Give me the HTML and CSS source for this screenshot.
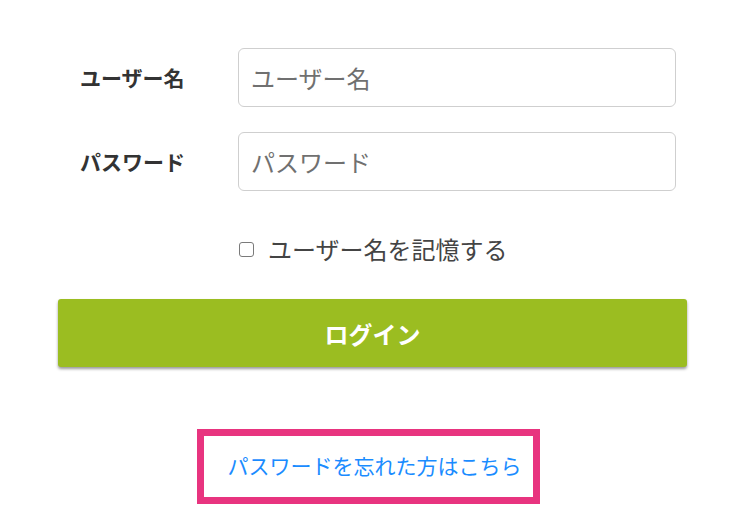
FILE: index.html
```html
<!DOCTYPE html>
<html lang="ja">
<head>
<meta charset="utf-8">
<title>ログイン</title>
<link rel="stylesheet" href="styles.css">
</head>
<body>
<main class="page">
  <form class="login-form">
    <div class="field-row">
      <label class="field-label" for="username">ユーザー名</label>
      <input class="field-input" id="username" type="text" placeholder="ユーザー名">
    </div>
    <div class="field-row">
      <label class="field-label" for="password">パスワード</label>
      <input class="field-input" id="password" type="password" placeholder="パスワード">
    </div>
    <label class="remember">
      <input class="remember-box" type="checkbox">
      <span class="remember-text">ユーザー名を記憶する</span>
    </label>
    <button class="login-button" type="button">ログイン</button>
  </form>
  <div class="forgot-wrap">
    <a class="forgot-link" href="#">パスワードを忘れた方はこちら</a>
  </div>
</main>
</body>
</html>
```

FILE: styles.css
```css
* {
  box-sizing: border-box;
}

html, body {
  margin: 0;
  padding: 0;
  background: #ffffff;
}

body {
  font-family: "Noto Sans CJK JP", "Noto Sans", sans-serif;
  color: #333333;
}

.page {
  width: 737px;
  padding-top: 48px;
}

.login-form {
  width: 629px;
  margin-left: 58px;
  display: flex;
  flex-direction: column;
}

.field-row {
  display: grid;
  grid-template-columns: 180px 438px;
  align-items: center;
  margin-bottom: 25px;
}

.field-label {
  padding-left: 22px;
  font-size: 21px;
  font-weight: 700;
  color: #333333;
  line-height: 1;
}

.field-input {
  height: 59px;
  width: 438px;
  border: 1px solid #cfcfcf;
  border-radius: 6px;
  padding: 0 12px;
  font-family: "Noto Sans CJK JP", "Noto Sans", sans-serif;
  font-size: 24px;
  color: #333333;
  outline: none;
}

.field-input::placeholder {
  color: #707070;
}

.remember {
  display: flex;
  align-items: center;
  margin-left: 181px;
  margin-top: 16px;
  height: 34px;
}

.remember-box {
  appearance: none;
  -webkit-appearance: none;
  width: 15px;
  height: 15px;
  margin: 0;
  border: 1.5px solid #7a7a7a;
  border-radius: 3px;
  background: #ffffff;
}

.remember-text {
  margin-left: 14px;
  font-size: 24px;
  color: #444444;
  line-height: 34px;
}

.login-button {
  margin-top: 33px;
  height: 68px;
  width: 629px;
  border: none;
  border-radius: 3px;
  background: #9bbd21;
  color: #ffffff;
  font-family: "Noto Sans CJK JP", "Noto Sans", sans-serif;
  font-size: 24px;
  font-weight: 700;
  box-shadow: 0 2px 3px rgba(0, 0, 0, 0.4);
}

.forgot-wrap {
  display: flex;
  justify-content: center;
  margin-top: 62px;
}

.forgot-link {
  display: flex;
  align-items: center;
  justify-content: center;
  width: 343px;
  height: 75px;
  border: 7px solid #e8347f;
  padding-left: 12px;
  padding-bottom: 3px;
  font-size: 21px;
  color: #1a8cff;
  text-decoration: none;
}
```
